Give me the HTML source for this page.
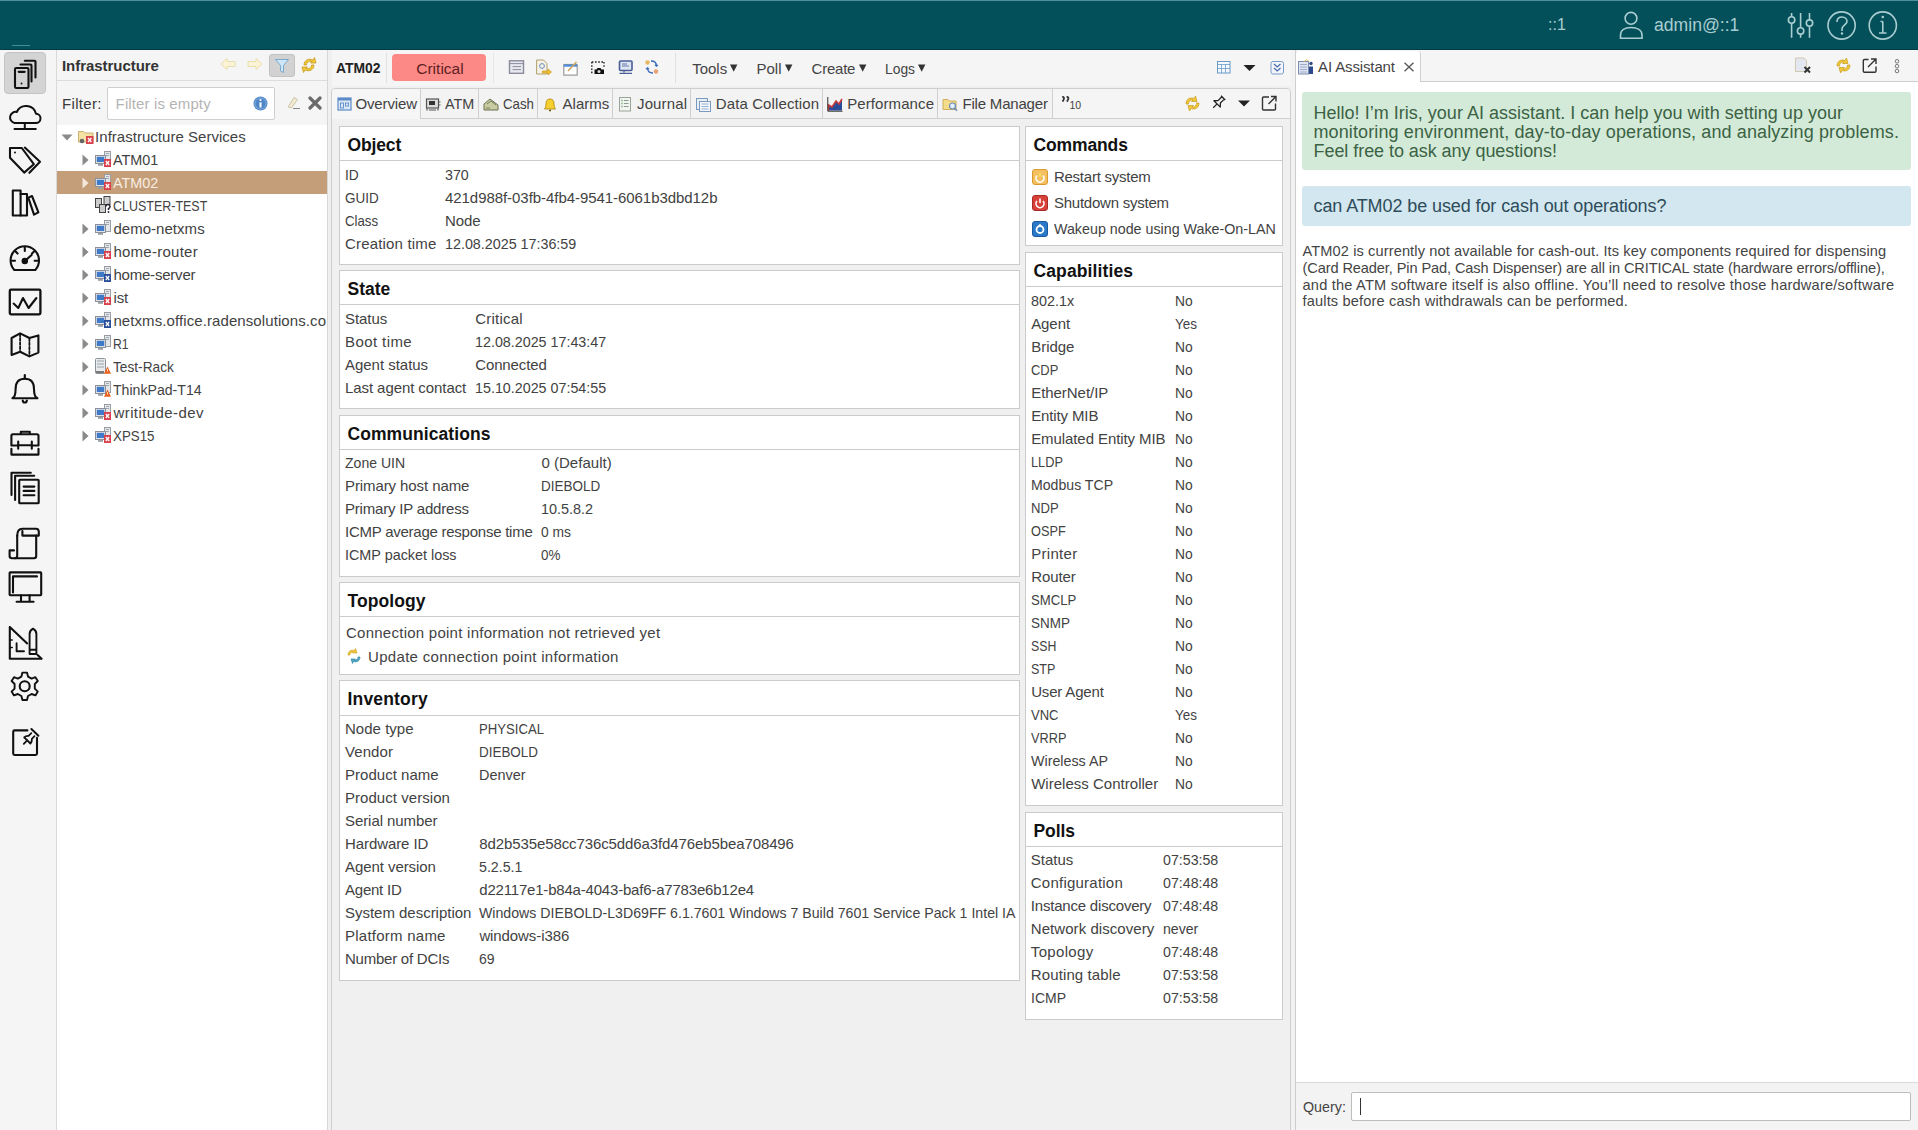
<!DOCTYPE html>
<html><head><meta charset="utf-8">
<style>
*{box-sizing:border-box;margin:0;padding:0}
html,body{width:1918px;height:1130px;overflow:hidden;background:#f0f0f0;font-family:"Liberation Sans",sans-serif;font-size:14.5px;color:#3d3d3d}
.a{position:absolute}
#hdr{left:0;top:0;width:1918px;height:50px;background:#04505a}
#side{left:0;top:50px;width:57px;height:1080px;background:#f5f5f5;border-right:1px solid #d9d9d9}
#tree{left:57px;top:50px;width:270px;height:1080px;background:#fff}
#treehd{left:0;top:0;width:270px;height:31px;background:#f5f5f5;border-bottom:1px solid #dcdcdc}
#filt{left:0;top:31px;width:270px;height:41px;background:#f5f5f5}
#div1{left:327px;top:50px;width:5px;height:1080px;background:#f0f0f0;border-left:1px solid #d6d6d6}
#main{left:332px;top:50px;width:959px;height:1080px;background:#f0f0f0}
#ai{left:1296px;top:50px;width:622px;height:1080px;background:#fff;border-left:1px solid #d0d0d0}
.sec{position:absolute;background:#fff;border:1px solid #d4d4d4}
.sec .h{height:34px;border-bottom:2px solid #d8d8d8;font-weight:bold;font-size:17.7px;color:#111;padding:7px 0 0 7px}
.row{position:absolute;white-space:nowrap;height:23px;line-height:23px}
.ic{position:absolute}
.t{white-space:nowrap;line-height:23px;font-size:15px;color:#424242}
</style></head><body>
<svg width="0" height="0" style="position:absolute">
<defs>
  <symbol id="node" viewBox="0 0 16 16">
    <rect x="9.5" y="0.5" width="6" height="11" fill="#e4e6e8" stroke="#9a9ea4" stroke-width="1"/>
    <path d="M11 2.5h3M11 4.5h3" stroke="#8a9aa8" stroke-width="0.8"/>
    <rect x="0.5" y="4.5" width="10" height="8" fill="#dfe3e8" stroke="#8b9098" stroke-width="1"/>
    <rect x="1.8" y="5.8" width="7.4" height="5.2" fill="#3f7ac8"/>
    <path d="M3 13h5v1.8H3z" fill="#9aa0a6"/>
  </symbol>
  <symbol id="bred" viewBox="0 0 16 16">
    <rect x="9" y="8" width="7" height="8" fill="#d8414c"/>
    <path d="M10.8 10l3.4 4M14.2 10l-3.4 4" stroke="#fff" stroke-width="1.3"/>
  </symbol>
  <symbol id="bblue" viewBox="0 0 16 16">
    <rect x="9" y="8" width="7" height="8" fill="#2a4f9a"/>
    <path d="M10.8 10l3.4 4M14.2 10l-3.4 4" stroke="#fff" stroke-width="1.2"/>
  </symbol>
  <symbol id="borange" viewBox="0 0 16 16">
    <path d="M12.5 8.5L16 15.8H9z" fill="#e8601c"/>
    <path d="M12.5 11v2.5" stroke="#ffd0a0" stroke-width="1"/>
  </symbol>
</defs></svg>
<div id="hdr" class="a">
  <div class="a" style="left:0;top:0;width:1918px;height:1px;background:#4f8f99"></div>
  <div class="a" style="left:12px;top:45px;width:18px;height:1px;background:#3e9090"></div>
  <div class="a" style="left:0;top:49px;width:1918px;height:1px;background:#033e46"></div>
  <div class="a" style="left:1548px;top:15px;font-size:16px;color:#a9cdd1;line-height:20px">::1</div>
  <svg class="a" style="left:1610px;top:5px" width="40" height="40" viewBox="1610 5 40 40" fill="none" stroke="#a9cdd1" stroke-width="1.6">
    <circle cx="1631" cy="18.3" r="5.9"/>
    <path d="M1620.5 38.3 L1620.5 35 C1620.5 30 1625 27.5 1631 27.5 C1637 27.5 1642 30 1642 35 L1642 38.3 Z"/>
  </svg>
  <div class="a" style="left:1654px;top:14px;font-size:17.6px;color:#a9cdd1;line-height:22px">admin@::1</div>
  <svg class="a" style="left:1780px;top:5px" width="130" height="40" viewBox="1780 5 130 40" fill="none" stroke="#a9cdd1" stroke-width="1.6">
    <path d="M1791.6 13 V16.8 M1791.6 23.2 V37.8 M1800.6 13 V27.7 M1800.6 34.1 V37.8 M1809.5 13 V19.9 M1809.5 26.3 V37.8"/>
    <circle cx="1791.6" cy="20" r="3.2"/><circle cx="1800.6" cy="30.9" r="3.2"/><circle cx="1809.5" cy="23.1" r="3.2"/>
    <circle cx="1841.6" cy="25.5" r="13.6"/>
    <path d="M1837 22 C1837 18.5 1839.5 17 1842 17 C1845 17 1847 19 1847 21.5 C1847 24.5 1842 25.5 1842 29 V31"/>
    <circle cx="1882.8" cy="25.5" r="13.6"/>
    <path d="M1882.8 21.5 V33 M1879 33 H1886.5 M1880.5 21.5 H1882.8"/>
  </svg>
  <svg class="a" style="left:1836px;top:32px" width="12" height="6"><circle cx="6" cy="1.5" r="1.2" fill="#a9cdd1"/></svg>
  <svg class="a" style="left:1876px;top:14px" width="12" height="6"><circle cx="6.8" cy="3" r="1.3" fill="#a9cdd1"/></svg>
</div>
<div id="side" class="a"></div>
<div class="a" style="left:4px;top:52px;width:42px;height:42px;background:#d4d4d4;border:1px solid #c4c4c4;border-radius:4px"></div>
<svg class="a" style="left:0;top:0" width="57" height="780" viewBox="0 0 57 780" fill="none" stroke="#111" stroke-width="2.1" stroke-linejoin="round" stroke-linecap="round">
  <!-- servers -->
  <rect x="15" y="68" width="13.5" height="20" rx="1.2"/>
  <path d="M18.8 71.8 H24.6" stroke-width="2.3"/>
  <circle cx="21.5" cy="83.5" r="0.9" fill="#111" stroke="none"/>
  <path d="M20.5 64.5 H30.5 Q31.5 64.5 31.5 65.5 V81.5"/>
  <path d="M24.8 60.8 H34.5 Q35.5 60.8 35.5 61.8 V77.5"/>
  <!-- cloud -->
  <path d="M14.5 123 H35.8 A4.6 4.6 0 0 0 36 113.8 A10.2 10.2 0 0 0 16.8 112 A5.6 5.6 0 0 0 14.5 123 Z" stroke-width="2"/>
  <path d="M14.5 129 H35.8 M24.8 124 V129" stroke-width="2"/>
  <!-- tag -->
  <path d="M10 148 H21.8 L33.8 164.2 L24.2 172.6 L10 157.8 Z" stroke-width="2.1"/>
  <circle cx="15" cy="152.6" r="1" fill="#111" stroke="none"/>
  <path d="M24.8 147.6 L40 161.8 L29.4 172.8"/>
  <!-- books -->
  <rect x="12.8" y="190.5" width="7.8" height="25"/>
  <path d="M20.6 194 H27 V215.5 H20.6"/>
  <path d="M28.3 197.6 L32 196 L38.4 212.3 L34 214.7 Z"/>
  <!-- gauge -->
  <path d="M14.3 270 A14.2 14.2 0 1 1 35.3 270 Z"/>
  <path d="M24.8 247.5 V251 M12 260.8 H15 M34.6 260.8 H37.6 M15.6 251.6 L17.6 253.6 M34 251.6 L32 253.6"/>
  <path d="M24.8 261 L31.6 255"/>
  <circle cx="24.8" cy="261" r="2.2" fill="#111"/>
  <!-- chart -->
  <rect x="9.8" y="289.7" width="30.6" height="24.6" rx="1.2" stroke-width="2.3"/>
  <path d="M13.6 303.6 L18.3 308 L23 298 L28.6 308 L36.4 298"/>
  <!-- map -->
  <path d="M11.6 338 L20.1 333.4 L29.4 338 L38.4 335.4 V352.6 L29.4 356.4 L20.1 351.8 L11.6 355 Z"/>
  <path d="M20.1 334 V351.5 M29.4 338.5 V356" stroke-dasharray="2.4 1.8" stroke-width="1.8"/>
  <!-- bell -->
  <path d="M12.4 398.3 Q15.6 396.8 15.6 389 Q15.6 378.8 24.8 378.8 Q34 378.8 34 389 Q34 396.8 37.4 398.3 Z"/>
  <path d="M24.8 375 V378.5" stroke-width="2.2"/>
  <path d="M22.8 400.5 A2 2 0 0 0 26.8 400.5" stroke-width="2.2"/>
  <!-- briefcase -->
  <path d="M20.8 434 V431.8 H29.8 V434"/>
  <path d="M18.2 445.5 H11.4 V435.8 Q11.4 434.3 12.8 434.3 H37 Q38.5 434.3 38.5 435.8 V445.5 H31.8"/>
  <path d="M18.2 441.5 V448.8 M31.8 441.5 V448.8 M18.2 445.2 H31.8"/>
  <path d="M11.4 448.8 V454.6 H38.5 V448.8"/>
  <!-- docs -->
  <rect x="19.2" y="479.8" width="19.5" height="23.4" rx="0.8"/>
  <path d="M23.6 486.6 H34.4 M23.6 490.9 H34.4 M23.6 495.2 H34.4"/>
  <path d="M15.1 500 V475.8 H34.2"/>
  <path d="M11.5 495 V472.8 H30.8"/>
  <!-- scroll -->
  <path d="M17.2 535.6 V556 Q17.2 558.2 15 558.2 H12 Q9.6 558.2 9.6 556 V550.4 H14"/>
  <path d="M15 558.2 H34 Q36.2 558.2 36.2 556 V535.6"/>
  <path d="M17.2 536 Q17.2 528.8 22.4 528.8 H36 Q38.8 528.8 38.8 532 V535.6 H22.4 V531"/>
  <!-- monitor -->
  <rect x="9.6" y="572.4" width="31.6" height="22.8" rx="0.6"/>
  <path d="M13 592.4 V576.4 H37"/>
  <path d="M21 595.4 V601.6 M29.6 595.4 V601.6 M16.6 601.8 H33.6"/>
  <!-- ruler pencil -->
  <path d="M9.8 627 V658.8 H41.6 M9.8 627 L27.2 643.4 M37.6 655 L41.6 658.8"/>
  <path d="M16.6 643.2 V651.2 H24" stroke-width="1.9"/>
  <path d="M9.8 640 H12.2 M9.8 647.5 H12.2" stroke-width="1.6"/>
  <path d="M29.6 654 V634 Q29.6 630.4 33 628.6 Q36.4 630.4 36.4 634 V654 Z M29.6 649.8 H36.4" stroke-width="1.9"/>
  <!-- gear -->
  <path d="M22.4 672.6 H27 L28 676.6 L31.6 678.6 L35.4 677.2 L37.8 681 L34.8 684 V688.6 L37.8 691.6 L35.4 695.4 L31.6 694 L28 696 L27 700 H22.4 L21.4 696 L17.8 694 L14 695.4 L11.6 691.6 L14.6 688.6 V684 L11.6 681 L14 677.2 L17.8 678.6 L21.4 676.6 Z" stroke-width="1.9"/>
  <circle cx="24.7" cy="686.3" r="5"/>
  <!-- pinned -->
  <path d="M27.4 730.4 H14.6 Q13.2 730.4 13.2 731.8 V753.6 Q13.2 755 14.6 755 H35.6 Q37 755 37 753.6 V737.8"/>
  <path d="M31.4 729 L38.4 735.8" stroke-width="2"/>
  <path d="M31.3 733.2 L28.6 735.8 Q25.8 735.6 24.2 737.3 L30.4 743.5 Q32.1 741.8 31.9 738.8 L34.5 736.2" stroke-width="1.8"/>
  <path d="M27.2 740.4 L23.8 743.8" stroke-width="1.8"/>
</svg>
<div id="tree" class="a">
  <div id="treehd" class="a">
    <div class="a t" style="left:5.00px;top:4.00px;font-size:15px;line-height:23px;white-space:nowrap;letter-spacing:-0.046px;font-weight:bold;color:#333">Infrastructure</div>
    <svg class="a" style="left:163px;top:7px" width="16" height="14" viewBox="0 0 16 14"><path d="M1 7L7 1.5V4.5H15V9.5H7V12.5Z" fill="#faf3d8" stroke="#e8dca8" stroke-width="1"/></svg>
    <svg class="a" style="left:190px;top:7px" width="16" height="14" viewBox="0 0 16 14"><path d="M15 7L9 1.5V4.5H1V9.5H9V12.5Z" fill="#faf3d8" stroke="#e8dca8" stroke-width="1"/></svg>
    <div class="a" style="left:212px;top:4px;width:26px;height:23px;background:#d2d2d2;border:1px solid #c2c2c2;border-radius:3px"></div>
    <svg class="a" style="left:217px;top:8px" width="16" height="16" viewBox="0 0 16 16"><path d="M1.5 1.5H14.5L9.5 7.5V14.5L6.5 13V7.5Z" fill="#cde6f8" stroke="#7aa8cc" stroke-width="1"/></svg>
    <svg class="a" style="left:244px;top:6px" width="16" height="18" viewBox="0 0 16 18"><path d="M3 9C3 4 8 2 12 4L13.5 1.5L15 7L9.5 7L11 5.5C8 4.5 5.5 6.5 5.5 9Z" fill="#f0c838" stroke="#c89a20" stroke-width="0.8"/><path d="M13 9C13 14 8 16 4 14L2.5 16.5L1 11L6.5 11L5 12.5C8 13.5 10.5 11.5 10.5 9Z" fill="#f0c838" stroke="#c89a20" stroke-width="0.8"/></svg>
  </div>
  <div id="filt" class="a" style="height:44px">
    <div class="a t" style="left:5.00px;top:10.50px;font-size:15px;line-height:23px;white-space:nowrap;letter-spacing:0.317px;color:#3a3a3a">Filter:</div>
    <div class="a" style="left:50px;top:6px;width:168px;height:33px;background:#fff;border:1px solid #cfcfcf;border-radius:2px"></div>
    <div class="a t" style="left:58.60px;top:10.50px;font-size:15px;line-height:23px;white-space:nowrap;letter-spacing:0.123px;color:#b4b4b4">Filter is empty</div>
    <svg class="a" style="left:196px;top:14.5px" width="15" height="15" viewBox="0 0 15 15"><circle cx="7.5" cy="7.5" r="7" fill="#4f87c6"/><circle cx="7.5" cy="7.5" r="5.6" fill="none" stroke="#8cb8e6" stroke-width="0.8"/><path d="M7.5 6.3V11.5" stroke="#fff" stroke-width="2"/><circle cx="7.5" cy="4" r="1.1" fill="#fff"/></svg>
    <svg class="a" style="left:229px;top:14px" width="15" height="15" viewBox="0 0 15 15"><path d="M2 12L8 2.5L11.5 4.5L5.5 13Z" fill="#f2ead0" stroke="#c8c0a0" stroke-width="0.9"/><path d="M7 13.5H14" stroke="#888" stroke-width="1"/></svg>
    <svg class="a" style="left:251px;top:15px" width="14" height="14" viewBox="0 0 14 14"><path d="M2 2L12 12M12 2L2 12" stroke="#6a6a6a" stroke-width="3.2" stroke-linecap="round"/></svg>
  </div>
  <svg class="a" style="left:4.3px;top:83.5px" width="12" height="7"><path d="M0.5 0.5H11.5L6 6.5Z" fill="#8a8a8a"/></svg><svg class="a" style="left:21px;top:79px" width="16" height="15" viewBox="0 0 16 15"><path d="M0.5 2.5h5l1.5 1.5h8v9h-14.5z" fill="#f3e2a4" stroke="#c8b070" stroke-width="1"/><circle cx="4" cy="12" r="2.3" fill="#666"/><rect x="8" y="7" width="7.5" height="8" fill="#d8414c"/><path d="M10 9l3.4 4M13.4 9l-3.4 4" stroke="#fff" stroke-width="1.3"/></svg><div class="a t" style="left:38.10px;top:75.00px;font-size:15px;line-height:23px;white-space:nowrap;letter-spacing:0.024px;color:#424242">Infrastructure Services</div>
  <svg class="a" style="left:25px;top:104px" width="7" height="12"><path d="M0.5 0.5V11.5L6.5 6Z" fill="#8a8a8a"/></svg><svg class="a" style="left:38px;top:101px" width="16" height="16"><use href="#node"/><use href="#bred"/></svg><div class="a t" style="left:56.40px;top:98.00px;font-size:15px;line-height:23px;white-space:nowrap;transform:scaleX(0.9587);transform-origin:0 0;color:#424242">ATM01</div>
  <div class="a" style="left:0;top:121px;width:270px;height:23px;background:#c49e78"></div><svg class="a" style="left:25px;top:127px" width="7" height="12"><path d="M0.5 0.5V11.5L6.5 6Z" fill="#f4e6d8"/></svg><svg class="a" style="left:38px;top:124px" width="16" height="16"><use href="#node"/><use href="#bred"/></svg><div class="a t" style="left:56.40px;top:121.00px;font-size:15px;line-height:23px;white-space:nowrap;transform:scaleX(0.9587);transform-origin:0 0;color:#f8ede2">ATM02</div>
  <svg class="a" style="left:38px;top:146px" width="16" height="17" viewBox="0 0 16 17"><rect x="0.5" y="2.5" width="6" height="9" fill="#ccc" stroke="#444" stroke-width="1"/><rect x="9" y="0.5" width="6" height="8" fill="#ccc" stroke="#444" stroke-width="1"/><rect x="4.5" y="8.5" width="6" height="8" fill="#ccc" stroke="#444" stroke-width="1"/><path d="M11 10.5a2 2 0 1 1 2.5 2v1.5" stroke="#223" stroke-width="1.5" fill="none"/><circle cx="13.5" cy="16" r="0.9" fill="#223"/></svg><div class="a t" style="left:56.40px;top:144.00px;font-size:15px;line-height:23px;white-space:nowrap;transform:scaleX(0.8321);transform-origin:0 0;color:#424242">CLUSTER-TEST</div>
  <svg class="a" style="left:25px;top:173px" width="7" height="12"><path d="M0.5 0.5V11.5L6.5 6Z" fill="#8a8a8a"/></svg><svg class="a" style="left:38px;top:170px" width="16" height="16"><use href="#node"/></svg><div class="a t" style="left:56.40px;top:167.00px;font-size:15px;line-height:23px;white-space:nowrap;letter-spacing:0.040px;color:#424242">demo-netxms</div>
  <svg class="a" style="left:25px;top:196px" width="7" height="12"><path d="M0.5 0.5V11.5L6.5 6Z" fill="#8a8a8a"/></svg><svg class="a" style="left:38px;top:193px" width="16" height="16"><use href="#node"/><use href="#bred"/></svg><div class="a t" style="left:56.40px;top:190.00px;font-size:15px;line-height:23px;white-space:nowrap;letter-spacing:0.262px;color:#424242">home-router</div>
  <svg class="a" style="left:25px;top:219px" width="7" height="12"><path d="M0.5 0.5V11.5L6.5 6Z" fill="#8a8a8a"/></svg><svg class="a" style="left:38px;top:216px" width="16" height="16"><use href="#node"/><use href="#bblue"/></svg><div class="a t" style="left:56.40px;top:213.00px;font-size:15px;line-height:23px;white-space:nowrap;letter-spacing:-0.203px;color:#424242">home-server</div>
  <svg class="a" style="left:25px;top:242px" width="7" height="12"><path d="M0.5 0.5V11.5L6.5 6Z" fill="#8a8a8a"/></svg><svg class="a" style="left:38px;top:239px" width="16" height="16"><use href="#node"/><use href="#bred"/></svg><div class="a t" style="left:56.40px;top:236.00px;font-size:15px;line-height:23px;white-space:nowrap;letter-spacing:-0.050px;color:#424242">ist</div>
  <svg class="a" style="left:25px;top:265px" width="7" height="12"><path d="M0.5 0.5V11.5L6.5 6Z" fill="#8a8a8a"/></svg><svg class="a" style="left:38px;top:262px" width="16" height="16"><use href="#node"/><use href="#bblue"/></svg><div class="a t" style="left:56.40px;top:259.00px;font-size:15px;line-height:23px;white-space:nowrap;letter-spacing:0.092px;color:#424242">netxms.office.radensolutions.co</div>
  <svg class="a" style="left:25px;top:288px" width="7" height="12"><path d="M0.5 0.5V11.5L6.5 6Z" fill="#8a8a8a"/></svg><svg class="a" style="left:38px;top:285px" width="16" height="16"><use href="#node"/></svg><div class="a t" style="left:56.40px;top:282.00px;font-size:15px;line-height:23px;white-space:nowrap;transform:scaleX(0.8125);transform-origin:0 0;color:#424242">R1</div>
  <svg class="a" style="left:25px;top:311px" width="7" height="12"><path d="M0.5 0.5V11.5L6.5 6Z" fill="#8a8a8a"/></svg><svg class="a" style="left:38px;top:308px" width="16" height="16" viewBox="0 0 16 16"><rect x="0.5" y="0.5" width="10" height="15" rx="1" fill="#e8eaec" stroke="#8a9098" stroke-width="1"/><path d="M2 3h7M2 6h7M2 9h7" stroke="#9aa4ae" stroke-width="1"/><path d="M1 14h8" stroke="#555" stroke-width="1.5"/><use href="#borange"/></svg><div class="a t" style="left:56.40px;top:305.00px;font-size:15px;line-height:23px;white-space:nowrap;transform:scaleX(0.9124);transform-origin:0 0;color:#424242">Test-Rack</div>
  <svg class="a" style="left:25px;top:334px" width="7" height="12"><path d="M0.5 0.5V11.5L6.5 6Z" fill="#8a8a8a"/></svg><svg class="a" style="left:38px;top:331px" width="16" height="16"><use href="#node"/><use href="#borange"/></svg><div class="a t" style="left:56.40px;top:328.00px;font-size:15px;line-height:23px;white-space:nowrap;transform:scaleX(0.9406);transform-origin:0 0;color:#424242">ThinkPad-T14</div>
  <svg class="a" style="left:25px;top:357px" width="7" height="12"><path d="M0.5 0.5V11.5L6.5 6Z" fill="#8a8a8a"/></svg><svg class="a" style="left:38px;top:354px" width="16" height="16"><use href="#node"/><use href="#bred"/></svg><div class="a t" style="left:56.48px;top:351.00px;font-size:15px;line-height:23px;white-space:nowrap;letter-spacing:0.415px;color:#424242">writitude-dev</div>
  <svg class="a" style="left:25px;top:380px" width="7" height="12"><path d="M0.5 0.5V11.5L6.5 6Z" fill="#8a8a8a"/></svg><svg class="a" style="left:38px;top:377px" width="16" height="16"><use href="#node"/><use href="#bred"/></svg><div class="a t" style="left:56.40px;top:374.00px;font-size:15px;line-height:23px;white-space:nowrap;transform:scaleX(0.8882);transform-origin:0 0;color:#424242">XPS15</div>
</div>
<div id="div1" class="a"></div>
<div id="main" class="a" style="background:#f0f0f0"></div>
<div class="a" style="left:332px;top:50px;width:959px;height:36px;background:#f5f5f5"></div>
<div class="a t" style="left:336.00px;top:56.50px;font-size:14.5px;line-height:23px;white-space:nowrap;transform:scaleX(0.9554);transform-origin:0 0;font-weight:bold;color:#222">ATM02</div>
<div class="a" style="left:386px;top:53px;width:1px;height:30px;background:#e0e0e0"></div>
<div class="a" style="left:392px;top:54px;width:94px;height:27px;background:#fc8986;border-radius:4px"></div>
<div class="a t" style="left:416.20px;top:57.00px;font-size:15.5px;line-height:23px;white-space:nowrap;letter-spacing:0.021px;color:#5e1e22">Critical</div>
<div class="a" style="left:493px;top:53px;width:1px;height:30px;background:#e6e6e6"></div>
<div class="a" style="left:675px;top:53px;width:1px;height:30px;background:#e0e0e0"></div>
<svg class="a" style="left:508px;top:59px" width="170" height="18" viewBox="508 59 170 18">
 <rect x="509.5" y="60.8" width="14" height="12.5" fill="#e8e8f0" stroke="#8a8c9c" stroke-width="1.4"/>
 <path d="M509.5 63.6H523.5M512.5 66.6H521M512.5 69.6H521" stroke="#8a8c9c" stroke-width="1"/>
 <path d="M536.6 60H543.5L547 63.5V74H536.6Z" fill="#f6f2e4" stroke="#b0a070" stroke-width="1"/>
 <circle cx="542" cy="66" r="2.4" fill="none" stroke="#6a8ac8" stroke-width="1"/>
 <path d="M542.5 71H548V69L551.5 72L548 75V73H542.5Z" fill="#f2c030" stroke="#c89a20" stroke-width="0.7"/>
 <rect x="563.8" y="64.5" width="13.4" height="10.6" fill="#fff" stroke="#999" stroke-width="1.2"/>
 <rect x="563.8" y="64.5" width="13.4" height="2.2" fill="#4a8ad8"/>
 <path d="M568 71L576.5 62" stroke="#c8a860" stroke-width="1.6"/>
 <path d="M591.8 62H604M591.8 62V74M604 62V68" stroke="#222" stroke-width="1.4" stroke-dasharray="1.6 1.6"/>
 <path d="M594.5 74V69.5H596.5L597.5 68H600.5L601.5 69.5H604V74Z" fill="#111"/>
 <circle cx="599" cy="71.5" r="1.5" fill="#ddd"/>
 <rect x="619.5" y="61" width="12.5" height="9.5" rx="1" fill="#dde4f2" stroke="#4a5c98" stroke-width="1.6"/>
 <path d="M622 64H627M622 66H629" stroke="#4a5c98" stroke-width="0.8"/>
 <path d="M624 70.5V72.5M619.5 73.3H632" stroke="#4a5c98" stroke-width="1.2"/>
 <circle cx="647.5" cy="62.5" r="2.2" fill="#e8b860"/><circle cx="656" cy="71.5" r="2.2" fill="#e8a070"/>
 <path d="M651 61C655 61 656.5 63 656.5 66L658 65M656.5 66L655 64.8" fill="none" stroke="#3a6ab8" stroke-width="1.3"/>
 <path d="M653 73C649 73 647.5 71 647.5 68L646 69M647.5 68L649 69.2" fill="none" stroke="#3a6ab8" stroke-width="1.3"/>
</svg>
<div class="a t" style="left:692.20px;top:56.50px;font-size:15px;line-height:23px;white-space:nowrap;letter-spacing:-0.006px;color:#444">Tools</div>
<svg class="a" style="left:730.2px;top:63px" width="8" height="10"><path d="M0 1.5H7.4L3.7 8.8Z" fill="#333"/></svg>
<div class="a t" style="left:756.50px;top:56.50px;font-size:15px;line-height:23px;white-space:nowrap;letter-spacing:-0.017px;color:#444">Poll</div>
<svg class="a" style="left:784.8px;top:63px" width="8" height="10"><path d="M0 1.5H7.4L3.7 8.8Z" fill="#333"/></svg>
<div class="a t" style="left:811.60px;top:56.50px;font-size:15px;line-height:23px;white-space:nowrap;letter-spacing:-0.240px;color:#444">Create</div>
<svg class="a" style="left:859px;top:63px" width="8" height="10"><path d="M0 1.5H7.4L3.7 8.8Z" fill="#333"/></svg>
<div class="a t" style="left:885.40px;top:56.50px;font-size:15px;line-height:23px;white-space:nowrap;transform:scaleX(0.9217);transform-origin:0 0;color:#444">Logs</div>
<svg class="a" style="left:918px;top:63px" width="8" height="10"><path d="M0 1.5H7.4L3.7 8.8Z" fill="#333"/></svg>
<svg class="a" style="left:1210px;top:56px" width="80" height="24" viewBox="1210 56 80 24">
 <rect x="1217.5" y="61.5" width="12.5" height="11.5" fill="#f4f8fc" stroke="#6a9ac8" stroke-width="1"/>
 <path d="M1217.5 64.5H1230M1221.5 64.5V73M1225.5 64.5V73M1217.5 68.5H1230" stroke="#6a9ac8" stroke-width="0.8"/>
 <path d="M1243.5 65H1255.5L1249.5 71Z" fill="#222"/>
 <rect x="1271" y="61.5" width="12.5" height="12.5" rx="2" fill="#f2f6fc" stroke="#7a9ac8" stroke-width="1"/>
 <path d="M1274 64L1277.2 67L1280.5 64M1274 68L1277.2 71L1280.5 68" fill="none" stroke="#4a6aa8" stroke-width="1.2"/>
</svg>
<div class="a" style="left:331px;top:88px;width:960px;height:1060px;border:1px solid #cfcfcf;border-radius:4px 4px 0 0;background:#f0f0f0"></div>
<div class="a" style="left:332px;top:89px;width:88px;height:30px;background:#f6f6f6;border-radius:3px 0 0 0"></div>
<div class="a" style="left:1052px;top:89px;width:238px;height:30px;border-left:1px solid #cfcfcf;border-bottom:1px solid #cfcfcf;background:#f5f5f5;border-radius:0 3px 0 0"></div>
<svg class="a" style="left:337px;top:96px" width="16" height="16" viewBox="0 0 16 16"><rect x="1" y="2" width="13" height="12" fill="#dce8f6" stroke="#5a8ac8" stroke-width="1.2"/><rect x="1" y="2" width="13" height="2.5" fill="#5a8ac8"/><rect x="3.5" y="7" width="3" height="5" fill="none" stroke="#5a8ac8" stroke-width="0.9"/><rect x="8.5" y="7" width="3" height="3" fill="none" stroke="#5a8ac8" stroke-width="0.9"/></svg>
<div class="a t" style="left:355.50px;top:91.50px;font-size:15px;line-height:23px;white-space:nowrap;letter-spacing:-0.150px">Overview</div>
<div class="a" style="left:420px;top:89px;width:58px;height:30px;border-left:1px solid #cfcfcf;border-bottom:1px solid #cfcfcf;background:#f3f3f3"></div>
<svg class="a" style="left:425px;top:96px" width="16" height="16" viewBox="0 0 16 16"><rect x="1.5" y="3" width="12" height="9" fill="#ddd" stroke="#555" stroke-width="1.2"/><rect x="4" y="5" width="6" height="4" fill="#333"/><path d="M2 12.5V14.5M13 12.5V14.5M4 14H11M14 6H15.5M14 9H15.5" stroke="#555" stroke-width="1.2"/></svg>
<div class="a t" style="left:445.00px;top:91.50px;font-size:15px;line-height:23px;white-space:nowrap;transform:scaleX(0.9582);transform-origin:0 0">ATM</div>
<div class="a" style="left:478px;top:89px;width:59px;height:30px;border-left:1px solid #cfcfcf;border-bottom:1px solid #cfcfcf;background:#f3f3f3"></div>
<svg class="a" style="left:483px;top:96px" width="16" height="16" viewBox="0 0 16 16"><path d="M1 8L7 3L15 9L15 14H1Z" fill="#c8cca0" stroke="#6a7050" stroke-width="1"/><path d="M4 8L8 5L13 9" stroke="#6a7050" stroke-width="0.9" fill="none"/><path d="M3 12H7" stroke="#6a7050" stroke-width="0.8"/></svg>
<div class="a t" style="left:503.25px;top:91.50px;font-size:15px;line-height:23px;white-space:nowrap;transform:scaleX(0.8851);transform-origin:0 0">Cash</div>
<div class="a" style="left:537px;top:89px;width:75px;height:30px;border-left:1px solid #cfcfcf;border-bottom:1px solid #cfcfcf;background:#f3f3f3"></div>
<svg class="a" style="left:542px;top:96px" width="16" height="16" viewBox="0 0 16 16"><path d="M2.5 13Q4 12 4 8Q4 3 8 3Q12 3 12 8Q12 12 13.5 13Z" fill="#f6d030" stroke="#b89010" stroke-width="0.9"/><path d="M7 14.5H9" stroke="#6a5a10" stroke-width="1.4"/></svg>
<div class="a t" style="left:562.50px;top:91.50px;font-size:15px;line-height:23px;white-space:nowrap;letter-spacing:0.020px">Alarms</div>
<div class="a" style="left:612px;top:89px;width:78px;height:30px;border-left:1px solid #cfcfcf;border-bottom:1px solid #cfcfcf;background:#f3f3f3"></div>
<svg class="a" style="left:617px;top:96px" width="16" height="16" viewBox="0 0 16 16"><rect x="2.5" y="1.5" width="11" height="13.5" fill="#f2f4f2" stroke="#9aa49a" stroke-width="1"/><path d="M4.5 4.5H5.5M4.5 7.5H5.5M4.5 10.5H5.5" stroke="#4a9a4a" stroke-width="1.4"/><path d="M7 4.5H11.5M7 7.5H11.5M7 10.5H11.5" stroke="#8a9a8a" stroke-width="1"/></svg>
<div class="a t" style="left:637.00px;top:91.50px;font-size:15px;line-height:23px;white-space:nowrap;letter-spacing:0.133px">Journal</div>
<div class="a" style="left:690px;top:89px;width:132px;height:30px;border-left:1px solid #cfcfcf;border-bottom:1px solid #cfcfcf;background:#f3f3f3"></div>
<svg class="a" style="left:695px;top:96px" width="16" height="16" viewBox="0 0 16 16"><rect x="1.5" y="2.5" width="11" height="11" fill="#e8eef6" stroke="#7a9ac0" stroke-width="1"/><rect x="4.5" y="5.5" width="11" height="10" fill="#f4f6fa" stroke="#7a9ac0" stroke-width="1"/><path d="M6.5 8H13.5M6.5 10.5H13.5M6.5 13H13.5" stroke="#8aaad0" stroke-width="0.9"/></svg>
<div class="a t" style="left:715.75px;top:91.50px;font-size:15px;line-height:23px;white-space:nowrap;letter-spacing:0.111px">Data Collection</div>
<div class="a" style="left:822px;top:89px;width:115px;height:30px;border-left:1px solid #cfcfcf;border-bottom:1px solid #cfcfcf;background:#f3f3f3"></div>
<svg class="a" style="left:827px;top:96px" width="16" height="16" viewBox="0 0 16 16"><path d="M1.5 14.5V9L5 11L9 5L12 8L15 3V14.5Z" fill="#2a4a9a"/><path d="M1.5 14.5V9L5 11L9 5L12 8L15 3" stroke="#c83a3a" stroke-width="1.6" fill="none"/><path d="M0.8 1V15.2H15.5" stroke="#333" stroke-width="1" fill="none"/></svg>
<div class="a t" style="left:847.20px;top:91.50px;font-size:15px;line-height:23px;white-space:nowrap;letter-spacing:0.092px">Performance</div>
<div class="a" style="left:937px;top:89px;width:115px;height:30px;border-left:1px solid #cfcfcf;border-bottom:1px solid #cfcfcf;background:#f3f3f3"></div>
<svg class="a" style="left:942px;top:96px" width="16" height="16" viewBox="0 0 16 16"><path d="M1 3.5H6L7.5 5H14V13.5H1Z" fill="#f4dc8a" stroke="#c8a850" stroke-width="0.9"/><circle cx="10.5" cy="10" r="3" fill="#e4eefa" stroke="#6a8ab8" stroke-width="1.2"/><path d="M12.6 12.2L15 14.8" stroke="#6a8ab8" stroke-width="1.6"/></svg>
<div class="a t" style="left:962.50px;top:91.50px;font-size:15px;line-height:23px;white-space:nowrap;letter-spacing:-0.193px">File Manager</div>
<svg class="a" style="left:1061px;top:96px" width="10" height="7" viewBox="0 0 10 7"><path d="M1.2 0.8C3 0.8 3.4 2 2.6 3.6L1.6 5.6M5.6 0.8C7.4 0.8 7.8 2 7 3.6L6 5.6" stroke="#333" stroke-width="1.8" fill="none"/></svg><div class="a t" style="left:1069.50px;top:98.20px;font-size:10.5px;line-height:14px;white-space:nowrap;color:#444">10</div>
<svg class="a" style="left:1180px;top:92px" width="100" height="24" viewBox="1180 92 100 24">
 <path d="M1186 104C1186 99 1190 97 1194 98.5L1195.5 96L1197 101.5L1191.5 101.5L1193 100C1190.5 99.5 1188.5 101 1188.5 104Z" fill="#f0c838" stroke="#c89a20" stroke-width="0.7"/>
 <path d="M1199 103C1199 108 1195 110 1191 108.5L1189.5 111L1188 105.5L1193.5 105.5L1192 107C1194.5 107.5 1196.5 106 1196.5 103Z" fill="#f0c838" stroke="#c89a20" stroke-width="0.7"/>
 <g transform="translate(1210.5 94.5) rotate(45 8 8)" fill="none" stroke="#222" stroke-width="1.3" stroke-linejoin="round"><path d="M5 1.5H11M6.3 1.5V7L3.5 10H12.5L9.7 7V1.5"/><path d="M8 10V15.5"/></g>
 <path d="M1238 100.5H1250L1244 106.5Z" fill="#222"/>
 <path d="M1269 97H1263.5Q1262.5 97 1262.5 98V109Q1262.5 110 1263.5 110H1274.5Q1275.5 110 1275.5 109V103.5" fill="none" stroke="#333" stroke-width="1.4"/>
 <path d="M1268.5 104L1276 96.5M1271 96.5H1276V101.5" fill="none" stroke="#333" stroke-width="1.4"/>
</svg>
<div class="a" style="left:339px;top:126px;width:681px;height:139px;background:#fff;border:1px solid #cbcbcb"></div>
<div class="a" style="left:339px;top:160px;width:681px;height:1px;background:#cbcbcb"></div>
<div class="a t" style="left:347.50px;top:133.50px;font-size:17.5px;line-height:23px;white-space:nowrap;letter-spacing:-0.135px;font-weight:bold;color:#111">Object</div>
<div class="a t" style="left:345.00px;top:162.50px;font-size:15px;line-height:23px;white-space:nowrap;transform:scaleX(0.9167);transform-origin:0 0">ID</div>
<div class="a t" style="left:445.00px;top:162.50px;font-size:15px;line-height:23px;white-space:nowrap;transform:scaleX(0.9481);transform-origin:0 0">370</div>
<div class="a t" style="left:345.00px;top:185.50px;font-size:15px;line-height:23px;white-space:nowrap;transform:scaleX(0.9000);transform-origin:0 0">GUID</div>
<div class="a t" style="left:445.00px;top:185.50px;font-size:15px;line-height:23px;white-space:nowrap;letter-spacing:-0.055px">421d988f-03fb-4fb4-9541-6061b3dbd12b</div>
<div class="a t" style="left:345.00px;top:208.50px;font-size:15px;line-height:23px;white-space:nowrap;transform:scaleX(0.8800);transform-origin:0 0">Class</div>
<div class="a t" style="left:445.00px;top:208.50px;font-size:15px;line-height:23px;white-space:nowrap;letter-spacing:-0.117px">Node</div>
<div class="a t" style="left:345.00px;top:231.50px;font-size:15px;line-height:23px;white-space:nowrap;letter-spacing:0.173px">Creation time</div>
<div class="a t" style="left:445.00px;top:231.50px;font-size:15px;line-height:23px;white-space:nowrap;transform:scaleX(0.9537);transform-origin:0 0">12.08.2025 17:36:59</div>
<div class="a" style="left:339px;top:270px;width:681px;height:139px;background:#fff;border:1px solid #cbcbcb"></div>
<div class="a" style="left:339px;top:304px;width:681px;height:1px;background:#cbcbcb"></div>
<div class="a t" style="left:347.50px;top:277.50px;font-size:17.5px;line-height:23px;white-space:nowrap;letter-spacing:0.003px;font-weight:bold;color:#111">State</div>
<div class="a t" style="left:345.00px;top:306.50px;font-size:15px;line-height:23px;white-space:nowrap;letter-spacing:-0.065px">Status</div>
<div class="a t" style="left:475.20px;top:306.50px;font-size:15px;line-height:23px;white-space:nowrap;letter-spacing:0.239px">Critical</div>
<div class="a t" style="left:345.00px;top:329.50px;font-size:15px;line-height:23px;white-space:nowrap;letter-spacing:0.416px">Boot time</div>
<div class="a t" style="left:475.20px;top:329.50px;font-size:15px;line-height:23px;white-space:nowrap;transform:scaleX(0.9533);transform-origin:0 0">12.08.2025 17:43:47</div>
<div class="a t" style="left:345.00px;top:352.50px;font-size:15px;line-height:23px;white-space:nowrap;letter-spacing:-0.027px">Agent status</div>
<div class="a t" style="left:475.20px;top:352.50px;font-size:15px;line-height:23px;white-space:nowrap;letter-spacing:-0.116px">Connected</div>
<div class="a t" style="left:345.00px;top:375.50px;font-size:15px;line-height:23px;white-space:nowrap;letter-spacing:-0.079px">Last agent contact</div>
<div class="a t" style="left:475.20px;top:375.50px;font-size:15px;line-height:23px;white-space:nowrap;transform:scaleX(0.9533);transform-origin:0 0">15.10.2025 07:54:55</div>
<div class="a" style="left:339px;top:415px;width:681px;height:162px;background:#fff;border:1px solid #cbcbcb"></div>
<div class="a" style="left:339px;top:449px;width:681px;height:1px;background:#cbcbcb"></div>
<div class="a t" style="left:347.50px;top:422.50px;font-size:17.5px;line-height:23px;white-space:nowrap;letter-spacing:0.075px;font-weight:bold;color:#111">Communications</div>
<div class="a t" style="left:345.00px;top:451.00px;font-size:15px;line-height:23px;white-space:nowrap;transform:scaleX(0.9361);transform-origin:0 0">Zone UIN</div>
<div class="a t" style="left:541.40px;top:451.00px;font-size:15px;line-height:23px;white-space:nowrap;letter-spacing:0.035px">0 (Default)</div>
<div class="a t" style="left:345.00px;top:474.00px;font-size:15px;line-height:23px;white-space:nowrap;letter-spacing:-0.091px">Primary host name</div>
<div class="a t" style="left:541.40px;top:474.00px;font-size:15px;line-height:23px;white-space:nowrap;transform:scaleX(0.8975);transform-origin:0 0">DIEBOLD</div>
<div class="a t" style="left:345.00px;top:497.00px;font-size:15px;line-height:23px;white-space:nowrap;letter-spacing:-0.193px">Primary IP address</div>
<div class="a t" style="left:541.40px;top:497.00px;font-size:15px;line-height:23px;white-space:nowrap;transform:scaleX(0.9608);transform-origin:0 0">10.5.8.2</div>
<div class="a t" style="left:345.00px;top:520.00px;font-size:15px;line-height:23px;white-space:nowrap;letter-spacing:-0.249px">ICMP average response time</div>
<div class="a t" style="left:541.40px;top:520.00px;font-size:15px;line-height:23px;white-space:nowrap;transform:scaleX(0.9207);transform-origin:0 0">0 ms</div>
<div class="a t" style="left:345.00px;top:543.00px;font-size:15px;line-height:23px;white-space:nowrap;transform:scaleX(0.9579);transform-origin:0 0">ICMP packet loss</div>
<div class="a t" style="left:541.40px;top:543.00px;font-size:15px;line-height:23px;white-space:nowrap;transform:scaleX(0.8950);transform-origin:0 0">0%</div>
<div class="a" style="left:339px;top:582px;width:681px;height:93px;background:#fff;border:1px solid #cbcbcb"></div>
<div class="a" style="left:339px;top:616px;width:681px;height:1px;background:#cbcbcb"></div>
<div class="a t" style="left:347.50px;top:589.50px;font-size:17.5px;line-height:23px;white-space:nowrap;letter-spacing:0.066px;font-weight:bold;color:#111">Topology</div>
<div class="a t" style="left:346.00px;top:620.50px;font-size:15px;line-height:23px;white-space:nowrap;letter-spacing:0.253px">Connection point information not retrieved yet</div>
<svg class="a" style="left:346px;top:648px" width="16" height="16" viewBox="0 0 16 16"><path d="M2 7C2 3 5 1.5 8.5 2.5L9.5 0.5L11 5L6.5 5L7.5 4C5.5 3.5 4 5 4 7Z" fill="#f0c838" stroke="#c89a20" stroke-width="0.6"/><path d="M14 9C14 13 11 14.5 7.5 13.5L6.5 15.5L5 11L9.5 11L8.5 12C10.5 12.5 12 11 12 9Z" fill="#4aa8c8" stroke="#2a7898" stroke-width="0.6"/></svg>
<div class="a t" style="left:368.10px;top:645.00px;font-size:15px;line-height:23px;white-space:nowrap;letter-spacing:0.299px">Update connection point information</div>
<div class="a" style="left:339px;top:680px;width:681px;height:301px;background:#fff;border:1px solid #cbcbcb"></div>
<div class="a" style="left:339px;top:715px;width:681px;height:1px;background:#cbcbcb"></div>
<div class="a t" style="left:347.50px;top:687.50px;font-size:17.5px;line-height:23px;white-space:nowrap;letter-spacing:0.169px;font-weight:bold;color:#111">Inventory</div>
<div class="a t" style="left:345.00px;top:717.00px;font-size:15px;line-height:23px;white-space:nowrap;letter-spacing:0.025px">Node type</div>
<div class="a t" style="left:479.30px;top:717.00px;font-size:15px;line-height:23px;white-space:nowrap;transform:scaleX(0.8763);transform-origin:0 0">PHYSICAL</div>
<div class="a t" style="left:345.00px;top:740.00px;font-size:15px;line-height:23px;white-space:nowrap;letter-spacing:0.070px">Vendor</div>
<div class="a t" style="left:479.30px;top:740.00px;font-size:15px;line-height:23px;white-space:nowrap;transform:scaleX(0.8960);transform-origin:0 0">DIEBOLD</div>
<div class="a t" style="left:345.00px;top:763.00px;font-size:15px;line-height:23px;white-space:nowrap;letter-spacing:0.030px">Product name</div>
<div class="a t" style="left:479.30px;top:763.00px;font-size:15px;line-height:23px;white-space:nowrap;transform:scaleX(0.9633);transform-origin:0 0">Denver</div>
<div class="a t" style="left:345.00px;top:786.00px;font-size:15px;line-height:23px;white-space:nowrap;letter-spacing:0.046px">Product version</div>
<div class="a t" style="left:345.00px;top:809.00px;font-size:15px;line-height:23px;white-space:nowrap;letter-spacing:-0.073px">Serial number</div>
<div class="a t" style="left:345.00px;top:832.00px;font-size:15px;line-height:23px;white-space:nowrap;letter-spacing:-0.083px">Hardware ID</div>
<div class="a t" style="left:479.30px;top:832.00px;font-size:15px;line-height:23px;white-space:nowrap;letter-spacing:-0.105px">8d2b535e58cc736c5dd6a3fd476eb5bea708496</div>
<div class="a t" style="left:345.00px;top:855.00px;font-size:15px;line-height:23px;white-space:nowrap;letter-spacing:-0.069px">Agent version</div>
<div class="a t" style="left:479.30px;top:855.00px;font-size:15px;line-height:23px;white-space:nowrap;transform:scaleX(0.9477);transform-origin:0 0">5.2.5.1</div>
<div class="a t" style="left:345.00px;top:878.00px;font-size:15px;line-height:23px;white-space:nowrap;letter-spacing:-0.236px">Agent ID</div>
<div class="a t" style="left:479.30px;top:878.00px;font-size:15px;line-height:23px;white-space:nowrap;letter-spacing:-0.195px">d22117e1-b84a-4043-baf6-a7783e6b12e4</div>
<div class="a t" style="left:345.00px;top:901.00px;font-size:15px;line-height:23px;white-space:nowrap;letter-spacing:-0.021px">System description</div>
<div class="a t" style="left:479.30px;top:901.00px;font-size:15px;line-height:23px;white-space:nowrap;transform:scaleX(0.9435);transform-origin:0 0">Windows DIEBOLD-L3D69FF 6.1.7601 Windows 7 Build 7601 Service Pack 1 Intel IA</div>
<div class="a t" style="left:345.00px;top:924.00px;font-size:15px;line-height:23px;white-space:nowrap;letter-spacing:0.244px">Platform name</div>
<div class="a t" style="left:479.38px;top:924.00px;font-size:15px;line-height:23px;white-space:nowrap;letter-spacing:-0.089px">windows-i386</div>
<div class="a t" style="left:345.00px;top:947.00px;font-size:15px;line-height:23px;white-space:nowrap;letter-spacing:-0.235px">Number of DCIs</div>
<div class="a t" style="left:479.30px;top:947.00px;font-size:15px;line-height:23px;white-space:nowrap;transform:scaleX(0.9369);transform-origin:0 0">69</div>
<div class="a" style="left:1025px;top:126px;width:258px;height:120px;background:#fff;border:1px solid #cbcbcb"></div>
<div class="a" style="left:1025px;top:160px;width:258px;height:1px;background:#cbcbcb"></div>
<div class="a t" style="left:1033.50px;top:133.50px;font-size:17.5px;line-height:23px;white-space:nowrap;letter-spacing:-0.127px;font-weight:bold;color:#111">Commands</div>
<svg class="a" style="left:1032px;top:168.5px" width="16" height="16" viewBox="0 0 16 16"><rect x="0.5" y="0.5" width="15" height="15" rx="2.5" fill="#f4c060" stroke="#d89a30" stroke-width="1"/><path d="M5 6.5A4 4 0 1 0 11 6.5" stroke="#fff" stroke-width="1.6" fill="none"/><path d="M8 4V8" stroke="#f8e060" stroke-width="1.6"/></svg>
<div class="a t" style="left:1053.90px;top:165.00px;font-size:15px;line-height:23px;white-space:nowrap;letter-spacing:-0.235px">Restart system</div>
<svg class="a" style="left:1032px;top:194.5px" width="16" height="16" viewBox="0 0 16 16"><rect x="0.5" y="0.5" width="15" height="15" rx="2.5" fill="#d8403a" stroke="#a82a24" stroke-width="1"/><path d="M5 6A4 4 0 1 0 11 6" stroke="#fff" stroke-width="1.6" fill="none"/><path d="M8 3.5V8" stroke="#fff" stroke-width="1.6"/></svg>
<div class="a t" style="left:1053.90px;top:191.00px;font-size:15px;line-height:23px;white-space:nowrap;letter-spacing:-0.230px">Shutdown system</div>
<svg class="a" style="left:1032px;top:220.5px" width="16" height="16" viewBox="0 0 16 16"><rect x="0.5" y="0.5" width="15" height="15" rx="2.5" fill="#2a78c8" stroke="#1a58a0" stroke-width="1"/><circle cx="8" cy="8.5" r="3.5" stroke="#fff" stroke-width="1.8" fill="none"/><path d="M8 3V5" stroke="#fff" stroke-width="1.4"/></svg>
<div class="a t" style="left:1053.90px;top:217.00px;font-size:15px;line-height:23px;white-space:nowrap;transform:scaleX(0.9512);transform-origin:0 0">Wakeup node using Wake-On-LAN</div>
<div class="a" style="left:1025px;top:252px;width:258px;height:554px;background:#fff;border:1px solid #cbcbcb"></div>
<div class="a" style="left:1025px;top:286px;width:258px;height:1px;background:#cbcbcb"></div>
<div class="a t" style="left:1033.50px;top:259.50px;font-size:17.5px;line-height:23px;white-space:nowrap;letter-spacing:0.122px;font-weight:bold;color:#111">Capabilities</div>
<div class="a t" style="left:1031.20px;top:289.00px;font-size:15px;line-height:23px;white-space:nowrap;transform:scaleX(0.9584);transform-origin:0 0">802.1x</div>
<div class="a t" style="left:1174.50px;top:289.00px;font-size:15px;line-height:23px;white-space:nowrap;transform:scaleX(0.9219);transform-origin:0 0">No</div>
<div class="a t" style="left:1031.20px;top:312.00px;font-size:15px;line-height:23px;white-space:nowrap;letter-spacing:-0.081px">Agent</div>
<div class="a t" style="left:1174.50px;top:312.00px;font-size:15px;line-height:23px;white-space:nowrap;transform:scaleX(0.8957);transform-origin:0 0">Yes</div>
<div class="a t" style="left:1031.20px;top:335.00px;font-size:15px;line-height:23px;white-space:nowrap;letter-spacing:-0.030px">Bridge</div>
<div class="a t" style="left:1174.50px;top:335.00px;font-size:15px;line-height:23px;white-space:nowrap;transform:scaleX(0.9219);transform-origin:0 0">No</div>
<div class="a t" style="left:1031.20px;top:358.00px;font-size:15px;line-height:23px;white-space:nowrap;transform:scaleX(0.8626);transform-origin:0 0">CDP</div>
<div class="a t" style="left:1174.50px;top:358.00px;font-size:15px;line-height:23px;white-space:nowrap;transform:scaleX(0.9219);transform-origin:0 0">No</div>
<div class="a t" style="left:1031.20px;top:381.00px;font-size:15px;line-height:23px;white-space:nowrap;letter-spacing:-0.045px">EtherNet/IP</div>
<div class="a t" style="left:1174.50px;top:381.00px;font-size:15px;line-height:23px;white-space:nowrap;transform:scaleX(0.9219);transform-origin:0 0">No</div>
<div class="a t" style="left:1031.20px;top:404.00px;font-size:15px;line-height:23px;white-space:nowrap;letter-spacing:-0.125px">Entity MIB</div>
<div class="a t" style="left:1174.50px;top:404.00px;font-size:15px;line-height:23px;white-space:nowrap;transform:scaleX(0.9219);transform-origin:0 0">No</div>
<div class="a t" style="left:1031.20px;top:427.00px;font-size:15px;line-height:23px;white-space:nowrap;letter-spacing:-0.083px">Emulated Entity MIB</div>
<div class="a t" style="left:1174.50px;top:427.00px;font-size:15px;line-height:23px;white-space:nowrap;transform:scaleX(0.9219);transform-origin:0 0">No</div>
<div class="a t" style="left:1031.20px;top:450.00px;font-size:15px;line-height:23px;white-space:nowrap;transform:scaleX(0.8507);transform-origin:0 0">LLDP</div>
<div class="a t" style="left:1174.50px;top:450.00px;font-size:15px;line-height:23px;white-space:nowrap;transform:scaleX(0.9219);transform-origin:0 0">No</div>
<div class="a t" style="left:1031.20px;top:473.00px;font-size:15px;line-height:23px;white-space:nowrap;transform:scaleX(0.9404);transform-origin:0 0">Modbus TCP</div>
<div class="a t" style="left:1174.50px;top:473.00px;font-size:15px;line-height:23px;white-space:nowrap;transform:scaleX(0.9219);transform-origin:0 0">No</div>
<div class="a t" style="left:1031.20px;top:496.00px;font-size:15px;line-height:23px;white-space:nowrap;transform:scaleX(0.8720);transform-origin:0 0">NDP</div>
<div class="a t" style="left:1174.50px;top:496.00px;font-size:15px;line-height:23px;white-space:nowrap;transform:scaleX(0.9219);transform-origin:0 0">No</div>
<div class="a t" style="left:1031.20px;top:519.00px;font-size:15px;line-height:23px;white-space:nowrap;transform:scaleX(0.8489);transform-origin:0 0">OSPF</div>
<div class="a t" style="left:1174.50px;top:519.00px;font-size:15px;line-height:23px;white-space:nowrap;transform:scaleX(0.9219);transform-origin:0 0">No</div>
<div class="a t" style="left:1031.20px;top:542.00px;font-size:15px;line-height:23px;white-space:nowrap;letter-spacing:0.304px">Printer</div>
<div class="a t" style="left:1174.50px;top:542.00px;font-size:15px;line-height:23px;white-space:nowrap;transform:scaleX(0.9219);transform-origin:0 0">No</div>
<div class="a t" style="left:1031.20px;top:565.00px;font-size:15px;line-height:23px;white-space:nowrap;letter-spacing:-0.080px">Router</div>
<div class="a t" style="left:1174.50px;top:565.00px;font-size:15px;line-height:23px;white-space:nowrap;transform:scaleX(0.9219);transform-origin:0 0">No</div>
<div class="a t" style="left:1031.20px;top:588.00px;font-size:15px;line-height:23px;white-space:nowrap;transform:scaleX(0.8766);transform-origin:0 0">SMCLP</div>
<div class="a t" style="left:1174.50px;top:588.00px;font-size:15px;line-height:23px;white-space:nowrap;transform:scaleX(0.9219);transform-origin:0 0">No</div>
<div class="a t" style="left:1031.20px;top:611.00px;font-size:15px;line-height:23px;white-space:nowrap;transform:scaleX(0.8973);transform-origin:0 0">SNMP</div>
<div class="a t" style="left:1174.50px;top:611.00px;font-size:15px;line-height:23px;white-space:nowrap;transform:scaleX(0.9219);transform-origin:0 0">No</div>
<div class="a t" style="left:1031.20px;top:634.00px;font-size:15px;line-height:23px;white-space:nowrap;transform:scaleX(0.8208);transform-origin:0 0">SSH</div>
<div class="a t" style="left:1174.50px;top:634.00px;font-size:15px;line-height:23px;white-space:nowrap;transform:scaleX(0.9219);transform-origin:0 0">No</div>
<div class="a t" style="left:1031.20px;top:657.00px;font-size:15px;line-height:23px;white-space:nowrap;transform:scaleX(0.8363);transform-origin:0 0">STP</div>
<div class="a t" style="left:1174.50px;top:657.00px;font-size:15px;line-height:23px;white-space:nowrap;transform:scaleX(0.9219);transform-origin:0 0">No</div>
<div class="a t" style="left:1031.20px;top:680.00px;font-size:15px;line-height:23px;white-space:nowrap;letter-spacing:-0.175px">User Agent</div>
<div class="a t" style="left:1174.50px;top:680.00px;font-size:15px;line-height:23px;white-space:nowrap;transform:scaleX(0.9219);transform-origin:0 0">No</div>
<div class="a t" style="left:1031.20px;top:703.00px;font-size:15px;line-height:23px;white-space:nowrap;transform:scaleX(0.8689);transform-origin:0 0">VNC</div>
<div class="a t" style="left:1174.50px;top:703.00px;font-size:15px;line-height:23px;white-space:nowrap;transform:scaleX(0.8957);transform-origin:0 0">Yes</div>
<div class="a t" style="left:1031.20px;top:726.00px;font-size:15px;line-height:23px;white-space:nowrap;transform:scaleX(0.8489);transform-origin:0 0">VRRP</div>
<div class="a t" style="left:1174.50px;top:726.00px;font-size:15px;line-height:23px;white-space:nowrap;transform:scaleX(0.9219);transform-origin:0 0">No</div>
<div class="a t" style="left:1031.20px;top:749.00px;font-size:15px;line-height:23px;white-space:nowrap;transform:scaleX(0.9524);transform-origin:0 0">Wireless AP</div>
<div class="a t" style="left:1174.50px;top:749.00px;font-size:15px;line-height:23px;white-space:nowrap;transform:scaleX(0.9219);transform-origin:0 0">No</div>
<div class="a t" style="left:1031.20px;top:772.00px;font-size:15px;line-height:23px;white-space:nowrap;letter-spacing:0.018px">Wireless Controller</div>
<div class="a t" style="left:1174.50px;top:772.00px;font-size:15px;line-height:23px;white-space:nowrap;transform:scaleX(0.9219);transform-origin:0 0">No</div>
<div class="a" style="left:1025px;top:812px;width:258px;height:208px;background:#fff;border:1px solid #cbcbcb"></div>
<div class="a" style="left:1025px;top:846px;width:258px;height:1px;background:#cbcbcb"></div>
<div class="a t" style="left:1033.50px;top:819.50px;font-size:17.5px;line-height:23px;white-space:nowrap;letter-spacing:-0.081px;font-weight:bold;color:#111">Polls</div>
<div class="a t" style="left:1030.80px;top:848.00px;font-size:15px;line-height:23px;white-space:nowrap;letter-spacing:-0.005px">Status</div>
<div class="a t" style="left:1162.70px;top:848.00px;font-size:15px;line-height:23px;white-space:nowrap;transform:scaleX(0.9465);transform-origin:0 0">07:53:58</div>
<div class="a t" style="left:1030.80px;top:871.00px;font-size:15px;line-height:23px;white-space:nowrap;letter-spacing:0.229px">Configuration</div>
<div class="a t" style="left:1162.70px;top:871.00px;font-size:15px;line-height:23px;white-space:nowrap;transform:scaleX(0.9465);transform-origin:0 0">07:48:48</div>
<div class="a t" style="left:1030.80px;top:894.00px;font-size:15px;line-height:23px;white-space:nowrap;letter-spacing:-0.200px">Instance discovery</div>
<div class="a t" style="left:1162.70px;top:894.00px;font-size:15px;line-height:23px;white-space:nowrap;transform:scaleX(0.9465);transform-origin:0 0">07:48:48</div>
<div class="a t" style="left:1030.80px;top:917.00px;font-size:15px;line-height:23px;white-space:nowrap;letter-spacing:0.053px">Network discovery</div>
<div class="a t" style="left:1162.70px;top:917.00px;font-size:15px;line-height:23px;white-space:nowrap;transform:scaleX(0.9413);transform-origin:0 0">never</div>
<div class="a t" style="left:1030.80px;top:940.00px;font-size:15px;line-height:23px;white-space:nowrap;letter-spacing:0.332px">Topology</div>
<div class="a t" style="left:1162.70px;top:940.00px;font-size:15px;line-height:23px;white-space:nowrap;transform:scaleX(0.9465);transform-origin:0 0">07:48:48</div>
<div class="a t" style="left:1030.80px;top:963.00px;font-size:15px;line-height:23px;white-space:nowrap;letter-spacing:0.115px">Routing table</div>
<div class="a t" style="left:1162.70px;top:963.00px;font-size:15px;line-height:23px;white-space:nowrap;transform:scaleX(0.9465);transform-origin:0 0">07:53:58</div>
<div class="a t" style="left:1030.80px;top:986.00px;font-size:15px;line-height:23px;white-space:nowrap;transform:scaleX(0.9333);transform-origin:0 0">ICMP</div>
<div class="a t" style="left:1162.70px;top:986.00px;font-size:15px;line-height:23px;white-space:nowrap;transform:scaleX(0.9465);transform-origin:0 0">07:53:58</div>
<div class="a" style="left:1291px;top:50px;width:4px;height:1080px;background:#f2f2f2"></div><div id="ai" class="a" style="left:1295px;top:50px;width:623px;height:1080px;background:#fff;border-left:1px solid #cdcdcd"></div>
<div class="a" style="left:1296px;top:50px;width:622px;height:32px;background:#f5f5f5;border-bottom:1px solid #cfcfcf"></div>
<div class="a" style="left:1295px;top:51px;width:126px;height:31px;background:#fff;border-left:1px solid #cfcfcf;border-right:1px solid #cfcfcf;border-radius:3px 3px 0 0"></div>
<svg class="a" style="left:1298px;top:59px" width="16" height="16" viewBox="0 0 16 16">
  <rect x="0.5" y="2.5" width="10" height="12.5" fill="#dfe6f2" stroke="#7a8ab0" stroke-width="1"/>
  <path d="M2 5.5H9M2 8H9M2 10.5H9M2 13H9" stroke="#8a9ac0" stroke-width="0.8"/>
  <path d="M6 2.5L9 0.5L11 2.5" stroke="#e0c060" stroke-width="1" fill="none"/>
  <circle cx="13" cy="4.5" r="1.7" fill="#2a4a8a"/>
  <path d="M11 7.5H15V15H11Z" fill="#2a4a8a"/>
</svg>
<div class="a t" style="left:1318.00px;top:55.00px;font-size:15px;line-height:23px;white-space:nowrap;letter-spacing:-0.125px;color:#444">AI Assistant</div>
<svg class="a" style="left:1403px;top:62px" width="12" height="10" viewBox="0 0 12 10"><path d="M1.5 0.8L10.5 9.2M10.5 0.8L1.5 9.2" stroke="#555" stroke-width="1.3"/></svg>
<svg class="a" style="left:1790px;top:54px" width="120" height="24" viewBox="1790 54 120 24">
  <path d="M1795.5 58H1804L1806.5 60.5V71.5H1795.5Z" fill="#e4e6f0" stroke="#c8c0a0" stroke-width="0.8"/>
  <path d="M1804.5 67L1810 72.5M1810 67L1804.5 72.5" stroke="#333" stroke-width="2"/>
  <path d="M1837 66C1837 61 1841 59 1845 60.5L1846.5 58L1848 63.5L1842.5 63.5L1844 62C1841.5 61.5 1839.5 63 1839.5 66Z" fill="#f0c838" stroke="#c89a20" stroke-width="0.7"/>
  <path d="M1850 65C1850 70 1846 72 1842 70.5L1840.5 73L1839 67.5L1844.5 67.5L1843 69C1845.5 69.5 1847.5 68 1847.5 65Z" fill="#f0c838" stroke="#c89a20" stroke-width="0.7"/>
  <path d="M1868.5 59.5H1864.5Q1863.3 59.5 1863.3 60.7V71Q1863.3 72.2 1864.5 72.2H1874.8Q1876 72.2 1876 71V66.5" fill="none" stroke="#333" stroke-width="1.4"/>
  <path d="M1868 67L1876 59M1871 59H1876V64" fill="none" stroke="#333" stroke-width="1.4"/>
  <circle cx="1897" cy="61.3" r="1.8" fill="none" stroke="#777" stroke-width="1"/>
  <circle cx="1897" cy="66.2" r="1.8" fill="none" stroke="#777" stroke-width="1"/>
  <circle cx="1897" cy="71" r="1.8" fill="none" stroke="#777" stroke-width="1"/>
</svg>
<div class="a" style="left:1302px;top:92px;width:609px;height:78px;background:#d4ead8;border-radius:3px"></div>
<div class="a t" style="left:1313.50px;top:104.00px;font-size:18px;line-height:19px;white-space:nowrap;letter-spacing:0.018px;color:#3b6244">Hello! I’m Iris, your AI assistant. I can help you with setting up your</div><div class="a t" style="left:1313.50px;top:123.00px;font-size:18px;line-height:19px;white-space:nowrap;letter-spacing:0.118px;color:#3b6244">monitoring environment, day-to-day operations, and analyzing problems.</div><div class="a t" style="left:1313.50px;top:142.00px;font-size:18px;line-height:19px;white-space:nowrap;letter-spacing:-0.055px;color:#3b6244">Feel free to ask any questions!</div>
<div class="a" style="left:1302px;top:186px;width:609px;height:40px;background:#d2e7ef;border-radius:3px"></div>
<div class="a t" style="left:1313.50px;top:196.00px;font-size:18px;line-height:21px;white-space:nowrap;letter-spacing:-0.096px;color:#2e4c5a">can ATM02 be used for cash out operations?</div>
<div class="a t" style="left:1302.50px;top:243.20px;font-size:14.6px;line-height:17px;white-space:nowrap;letter-spacing:0.110px;color:#444">ATM02 is currently not available for cash-out. Its key components required for dispensing</div><div class="a t" style="left:1302.50px;top:259.90px;font-size:14.6px;line-height:17px;white-space:nowrap;letter-spacing:-0.110px;color:#444">(Card Reader, Pin Pad, Cash Dispenser) are all in CRITICAL state (hardware errors/offline),</div><div class="a t" style="left:1302.50px;top:276.60px;font-size:14.6px;line-height:17px;white-space:nowrap;letter-spacing:0.208px;color:#444">and the ATM software itself is also offline. You’ll need to resolve those hardware/software</div><div class="a t" style="left:1302.50px;top:293.30px;font-size:14.6px;line-height:17px;white-space:nowrap;letter-spacing:0.157px;color:#444">faults before cash withdrawals can be performed.</div>
<div class="a" style="left:1296px;top:1082px;width:622px;height:48px;background:#f3f3f3;border-top:1px solid #dadada"></div>
<div class="a t" style="left:1302.60px;top:1095.00px;font-size:15px;line-height:23px;white-space:nowrap;transform:scaleX(0.9533);transform-origin:0 0;color:#444">Query:</div>
<div class="a" style="left:1351px;top:1092px;width:560px;height:29px;background:#fff;border:1px solid #bdbdbd;border-radius:2px"></div>
<div class="a" style="left:1360px;top:1098px;width:1px;height:17px;background:#333"></div>
</body></html>
